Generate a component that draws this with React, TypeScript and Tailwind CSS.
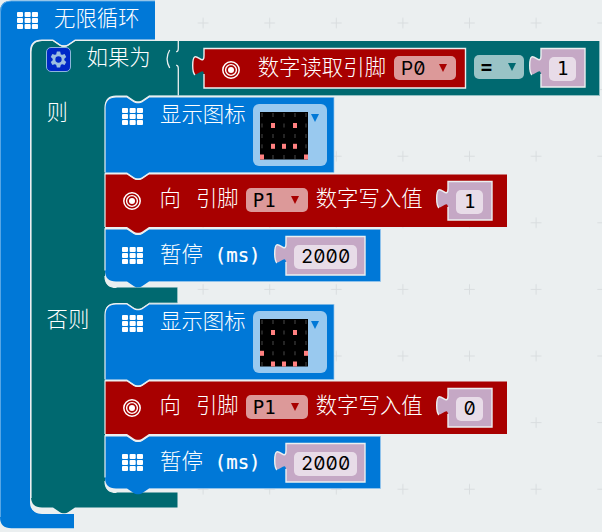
import type { ReactNode } from "react";

const BLUE = "#0078d7";
const TEAL = "#006970";
const RED = "#a80000";
const MAUVE = "#c5a8c5";
const LIGHT = "#ebeff0";

const cjk = "whitespace-pre pt-px font-['Liberation_Mono','Noto_Sans_CJK_SC',sans-serif] text-[21.4px] leading-[24px] font-light text-white";
const mono = "font-['DejaVu_Sans_Mono',monospace] text-[19px] leading-[23px]";
const zero = "font-['Inter',sans-serif] text-[19px] leading-[23px] [font-feature-settings:'zero','tnum']";

const NOTCH = "l7,4.8 q1.5,0.9 3,0.9 h2 q1.5,0 3,-0.9 l7,-4.8";
const NOTCH_BACK = "l-7,4.8 q-1.5,0.9 -3,0.9 h-2 q-1.5,0 -3,-0.9 l-7,-4.8";
const TAB_UP = "c0,-13.3 -11.3,10.7 -11.3,-10 s11.3,3.3 11.3,-10";

function Shape({ children }: { children: ReactNode }) {
  return (
    <svg className="pointer-events-none absolute top-0 left-0 overflow-visible" width="1" height="1" aria-hidden="true">
      {children}
    </svg>
  );
}

function GridIcon({ className = "" }: { className?: string }) {
  return (
    <svg className={`shrink-0 ${className}`} width="21" height="17" viewBox="0 0 21 17" fill="white">
      {[0, 6, 12].map((y) =>
        [0, 7.6, 14.9].map((x) => <rect key={`${x}-${y}`} x={x} y={y} width={x === 0 ? 6 : 6.1} height="5" rx="0.9" />),
      )}
    </svg>
  );
}

function TargetIcon({ className = "" }: { className?: string }) {
  return (
    <svg className={`shrink-0 ${className}`} width="18" height="18" viewBox="0 0 18 18" fill="none" stroke="white">
      <circle cx="9" cy="9" r="8.2" strokeWidth="1.5" />
      <circle cx="9" cy="9" r="5.4" strokeWidth="1.4" />
      <circle cx="9" cy="9" r="3" fill="white" stroke="none" />
    </svg>
  );
}

function Gear() {
  return (
    <div className="flex h-[25px] w-[25px] shrink-0 items-center justify-center rounded-[5px] border border-[#8db6dc] bg-[#0028c8]">
      <svg width="17" height="17" viewBox="-8.5 -8.5 17 17" fill="none" stroke="#9dbfe0">
        <circle r="4.5" strokeWidth="2.7" />
        {[0, 60, 120, 180, 240, 300].map((a) => (
          <path key={a} d="M-2.4,-5 L-1.6,-8 H1.6 L2.4,-5Z" fill="#9dbfe0" stroke="none" transform={`rotate(${a})`} />
        ))}
      </svg>
    </div>
  );
}

function Arrow({ color, className = "" }: { color: string; className?: string }) {
  return (
    <svg className={`shrink-0 ${className}`} width="8" height="8" viewBox="0 0 8 8">
      <path d="M0,0H8L4,8Z" fill={color} />
    </svg>
  );
}

function PinField({ name, className = "" }: { name: string; className?: string }) {
  return (
    <div className={`flex h-[24px] w-[62px] shrink-0 items-center rounded-[5px] bg-[#dc9999] pl-[7px] text-black ${className}`}>
      <span className={`w-[24px] ${name.includes("0") ? zero : mono}`}>{name}</span>
      <Arrow color={RED} className="ml-[14px]" />
    </div>
  );
}

function ValueBlock({ width, height, fill, className = "", children }: { width: number; height: number; fill: string; className?: string; children: ReactNode }) {
  const d = `M0,0.5 H${width - 0.5} V${height - 0.5} H0 V27.5 ${TAB_UP} Z`;
  return (
    <div className={`relative flex shrink-0 ${className}`}>
      <Shape>
        <path d={d} fill={fill} />
        <path d={`M0,26 V${height - 0.5} H${width - 0.5} V0.5 H0 V7.5 c0,13.3 -11.3,-10.7 -11.3,10 q0,7 2.2,9.5`} fill="none" stroke={LIGHT} strokeWidth="1.4" />
      </Shape>
      <div className="relative flex">{children}</div>
    </div>
  );
}

function NumberBlock({ value, className = "" }: { value: string; className?: string }) {
  const wide = value.length > 1;
  return (
    <ValueBlock width={wide ? 79.5 : 44.5} height={39.5} fill={MAUVE} className={`h-[40px] ${wide ? "w-[80px]" : "w-[45px]"} ${className}`}>
      <div className={`mt-[9px] ml-[8px] flex h-[24px] items-center justify-center rounded-[5px] bg-[#e8dce8] pb-[2px] text-black ${wide ? "w-[63px]" : "w-[27px]"}`}>
        <span className={value.includes("0") ? zero : mono}>{value}</span>
      </div>
    </ValueBlock>
  );
}

function StackBlock({ width, height, fill, first = false, last = false, className = "", children }: { width: number; height: number; fill: string; first?: boolean; last?: boolean; className?: string; children: ReactNode }) {
  const start = first ? "M0,12 Q0,1 11,1" : "M0,1";
  const bottom = last ? `H44 ${NOTCH_BACK} H11 Q0,${height} 0,${height - 11}` : `H44 ${NOTCH_BACK} H0`;
  return (
    <div className={`relative flex items-start ${className}`}>
      <Shape>
        <path d={`${start} H22 ${NOTCH} H${width} V${height} ${bottom} Z`} fill={fill} />
        <path d={`M0,${last ? height - 11 : height} ${first ? "V12 Q0,1 11,1" : "V0.8"} H22 ${NOTCH} H${width}`} fill="none" stroke={LIGHT} strokeWidth="1.2" />
        <path d={`M${width},1 V${height} H44`} fill="none" stroke="#9bc8ee" strokeWidth="0.7" opacity={last || first ? 1 : 0} />
      </Shape>
      <div className="relative flex items-start">{children}</div>
    </div>
  );
}

const FROWN = [[1, 1], [3, 1], [1, 3], [2, 3], [3, 3], [0, 4], [4, 4]];
const SMILE = [[1, 1], [3, 1], [0, 3], [4, 3], [1, 4], [2, 4], [3, 4]];
const COLS = [2, 13, 24, 35, 46];
const ROWS = [3, 13.5, 24, 34.3, 45];

function LedField({ lit, className = "" }: { lit: number[][]; className?: string }) {
  return (
    <div className={`flex h-[62px] w-[74px] shrink-0 items-start rounded-[6px] bg-[#99c9ef] pl-[7px] ${className}`}>
      <svg className="mt-[8px]" width="48" height="47.5" viewBox="0 0 48 47.5">
        <rect width="48" height="47.5" fill="black" />
        {ROWS.map((y, r) =>
          COLS.map((x, c) => {
            const on = lit.some(([a, b]) => a === c && b === r);
            return <rect key={`${r}-${c}`} x={on ? x - 2 : x - 1} y={on ? y - 2.5 : y - 2} width={on ? 4 : 2} height={on ? 5 : 4} fill={on ? "#ff8080" : "#242424"} />;
          }),
        )}
      </svg>
      <Arrow color={BLUE} className="mt-[10px] ml-[3px]" />
    </div>
  );
}

function Statements({ lit, value, lastClass, ledClass }: { lit: number[][]; value: string; lastClass: string; ledClass: string }) {
  return (
    <div className="flex flex-col">
      <StackBlock first width={229} height={76.5} fill={BLUE} className="h-[77px]">
        <GridIcon className="mt-[12px] ml-[16.5px]" />
        <span className={`mt-[7px] ml-[17.5px] ${cjk}`}>显示图标</span>
        <LedField lit={lit} className={ledClass} />
      </StackBlock>
      <StackBlock width={402} height={54} fill={RED} className="h-[55px]">
        <TargetIcon className="mt-[19px] ml-[18px]" />
        <span className={`mt-[14px] ml-[18.5px] ${cjk}`}>向</span>
        <span className={`mt-[14px] ml-[15px] ${cjk}`}>引脚</span>
        <PinField name="P1" className="mt-[15px] ml-[7px]" />
        <span className={`mt-[14px] ml-[8px] ${cjk}`}>数字写入值</span>
        <NumberBlock value={value} className="mt-[8px] ml-[25.5px]" />
      </StackBlock>
      <StackBlock last width={275.5} height={53.5} fill={BLUE} className={lastClass}>
        <GridIcon className="mt-[19px] ml-[16.5px]" />
        <span className={`mt-[15px] ml-[17.5px] ${cjk}`}>暂停</span>
        <span className={`mt-[16px] ml-[12px] text-white [-webkit-text-stroke:0.2px_white] ${mono}`}>(ms)</span>
        <NumberBlock value="2000" className="mt-[8px] ml-[25.5px]" />
      </StackBlock>
    </div>
  );
}

function IfBlock() {
  return (
    <div className="relative flex flex-col">
      <Shape>
        <path
          d={`M0,12 Q0,1 11,1 H22 ${NOTCH} H568.5 V55.5 H118 ${NOTCH_BACK} H85 Q74,55.5 74,66.5 V236.5 Q74,247.5 85,247.5 H146.5 V263 H118 ${NOTCH_BACK} H85 Q74,263 74,274 V441.5 Q74,452.5 85,452.5 H146.5 V467.5 H44 ${NOTCH_BACK} H11 Q0,467.5 0,456.5Z`}
          fill={TEAL}
        />
        <path d={`M0,458 V12 Q0,0.5 11,0.5 H22 ${NOTCH} H568.5`} fill="none" stroke={LIGHT} strokeWidth="1.2" />
        <path d="M568.5,1 V55.5 H118 M146.5,248 V263 H118" fill="none" stroke="#92bfc3" strokeWidth="1" />
        <path d="M74,236 Q74,247.5 85.5,247.5 M74,441 Q74,452.5 85.5,452.5" fill="none" stroke={LIGHT} strokeWidth="1.2" />
        <path d="M147.3,1 V8 q0,4 -2.2,3.6 M147.3,55.5 V29 q0,-4 -2.2,-3.6 M138.7,10 q-5.2,8.5 0,18" fill="none" stroke={LIGHT} strokeWidth="1.3" />
      </Shape>
      <div className="relative flex h-[56px] items-start pl-[14.5px]">
        <div className="mt-[7px]"><Gear /></div>
        <span className={`mt-[6px] ml-[16px] ${cjk}`}>如果为</span>
        <ValueBlock width={262} height={40.5} fill={RED} className="mt-[8px] ml-[53px] h-[41px] w-[262px]">
          <TargetIcon className="mt-[13px] ml-[18px]" />
          <span className={`mt-[8px] ml-[18px] ${cjk}`}>数字读取引脚</span>
          <PinField name="P0" className="mt-[8px] ml-[8px]" />
        </ValueBlock>
        <div className="mt-[15px] ml-[8px] flex h-[24px] w-[50px] shrink-0 items-center rounded-[5px] bg-[#99c3c6] pl-[7px] text-black">
          <span className={`w-[12px] font-bold ${mono}`}>=</span>
          <Arrow color={TEAL} className="ml-[15px]" />
        </div>
        <NumberBlock value="1" className="mt-[8px] ml-[17.5px]" />
      </div>
      <div className="relative flex h-[192px] items-start">
        <span className={`mt-[5px] w-[74px] pl-[15.5px] ${cjk}`}>则</span>
        <Statements lit={FROWN} value="1" lastClass="h-[60px]" ledClass="mt-[8px] ml-[7px]" />
      </div>
      <div className="h-[15px]" />
      <div className="relative flex h-[190px] items-start">
        <span className={`mt-[5px] w-[74px] pl-[15.5px] ${cjk}`}>否则</span>
        <Statements lit={SMILE} value="0" lastClass="h-[58px]" ledClass="mt-[8px] ml-[7px]" />
      </div>
      <div className="h-[15px]" />
    </div>
  );
}

export default function App() {
  return (
    <main className="relative h-[532px] w-[602px] overflow-hidden bg-[#ebeff0]">
      <svg className="absolute inset-0" width="602" height="532" aria-hidden="true">
        <defs>
          <pattern id="crosses" x="169.8" y="-10.3" width="66.6" height="66.6" patternUnits="userSpaceOnUse">
            <path d="M28,33.3H38.6M33.3,28V38.6" stroke="#d9dddf" strokeWidth="1.1" />
          </pattern>
        </defs>
        <rect width="602" height="532" fill="url(#crosses)" />
      </svg>
      <div className="relative flex flex-col">
        <Shape>
          <path d={`M0,12 Q0,0.8 11.5,0.8 H155 V39.5 H75 ${NOTCH_BACK} H42 Q30,39.5 30,51 V502 Q30,513.5 42,513.5 H74 V528.3 H11.5 Q0,528.3 0,517Z`} fill={BLUE} />
          <path d="M0.5,517 V12 Q0.5,1 11.5,1 H155" fill="none" stroke="#6db2e8" strokeWidth="0.8" />
          <path d="M30.5,500 Q30.5,513.5 42,513.5 H74" fill="none" stroke={LIGHT} strokeWidth="1" />
        </Shape>
        <div className="relative flex h-[40px] items-start">
          <GridIcon className="mt-[12px] ml-[16.5px]" />
          <span className={`mt-[7px] ml-[16.5px] ${cjk}`}>无限循环</span>
        </div>
        <div className="pl-[31px]">
          <IfBlock />
        </div>
      </div>
    </main>
  );
}
